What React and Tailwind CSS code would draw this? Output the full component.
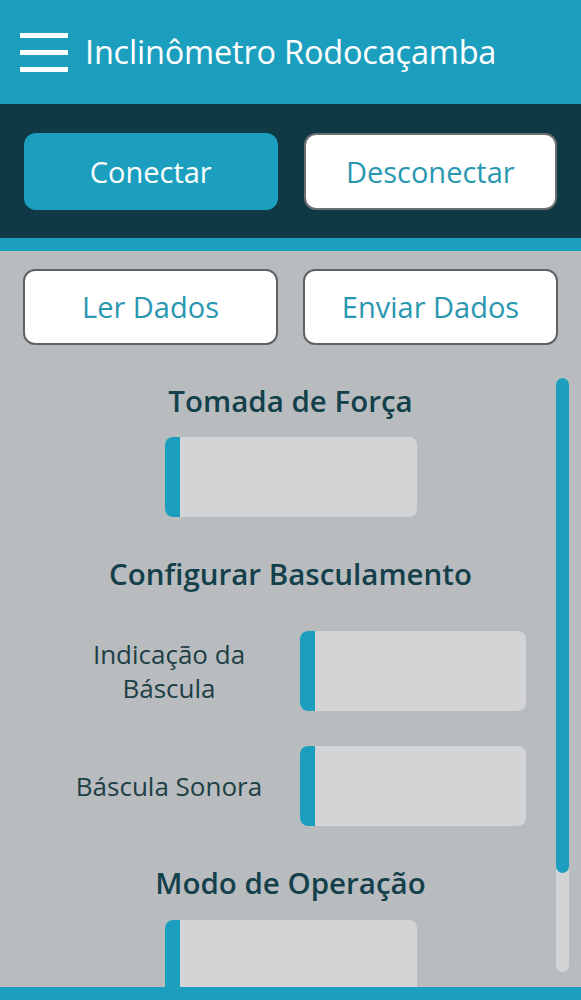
export default function App() {
  const font = { fontFamily: '"Open Sans", "Noto Sans", sans-serif' };
  const Box = ({ className = "" }) => (
    <div className={"flex h-[80px] overflow-hidden rounded-[8px] bg-[#d3d4d6] " + className}>
      <div className="w-[15px] bg-[#1c9fbe]" />
    </div>
  );
  return (
    <div style={font} className="relative flex h-[1000px] w-[581px] flex-col overflow-hidden bg-[#b9bcbe]">
      <header className="flex h-[104px] shrink-0 items-center gap-[17px] bg-[#1c9fbe] pl-[20px]">
        <div className="flex w-[48px] flex-col gap-[12px]">
          <div className="h-[5px] bg-white" />
          <div className="h-[5px] bg-white" />
          <div className="h-[5px] bg-white" />
        </div>
        <h1 className="text-[32.5px] leading-none tracking-[-0.2px] text-white">Inclinômetro Rodocaçamba</h1>
      </header>
      <div className="flex h-[134px] shrink-0 items-start gap-[26px] bg-[#0f3a45] px-[24px] pt-[29px]">
        <button className="flex h-[77px] w-[254px] items-center justify-center rounded-[12px] bg-[#1c9fbe] text-[29px] text-white">
          Conectar
        </button>
        <button className="flex h-[77px] w-[254px] items-center justify-center rounded-[12px] border-2 border-[#6b6f71] bg-white text-[29px] text-[#2a97b1]">
          Desconectar
        </button>
      </div>
      <div className="h-[13px] shrink-0 bg-[#1c9fbe]" />
      <div className="flex shrink-0 gap-[25px] px-[23px] pt-[18px]">
        <button className="flex h-[76px] w-[255px] items-center justify-center rounded-[12px] border-2 border-[#5f6365] bg-white text-[29px] text-[#2a97b1]">
          Ler Dados
        </button>
        <button className="flex h-[76px] w-[255px] items-center justify-center rounded-[12px] border-2 border-[#5f6365] bg-white text-[29px] text-[#2a97b1]">
          Enviar Dados
        </button>
      </div>
      <div className="relative flex-1 overflow-hidden">
        <div className="flex flex-col items-center pt-[37px]">
          <h2 className="h-[38px] text-[29.5px] font-semibold leading-[38px] text-[#13404b]">Tomada de Força</h2>
          <Box className="mt-[17px] w-[252px]" />
          <h2 className="mt-[38px] h-[38px] text-[29.5px] font-semibold leading-[38px] text-[#13404b]">Configurar Basculamento</h2>
          <div className="mt-[38px] flex w-full items-center">
            <div className="ml-[72px] w-[194px] text-center text-[26px] leading-[34px] text-[#1d3f46]">Indicação da Báscula</div>
            <Box className="ml-[34px] w-[226px]" />
          </div>
          <div className="mt-[35px] flex w-full items-center">
            <div className="ml-[72px] w-[194px] text-center text-[26px] leading-[34px] text-[#1d3f46]">Báscula Sonora</div>
            <Box className="ml-[34px] w-[226px]" />
          </div>
          <h2 className="mt-[38px] h-[38px] text-[29.5px] font-semibold leading-[38px] text-[#13404b]">Modo de Operação</h2>
          <Box className="mt-[18px] w-[252px]" />
        </div>
        <div className="absolute left-[556px] top-[33px] h-[594px] w-[13px] rounded-full bg-[#d3d4d6]">
          <div className="h-[495px] w-[13px] rounded-full bg-[#1c9fbe]" />
        </div>
      </div>
      <div className="h-[13px] shrink-0 bg-[#1c9fbe]" />
    </div>
  );
}
